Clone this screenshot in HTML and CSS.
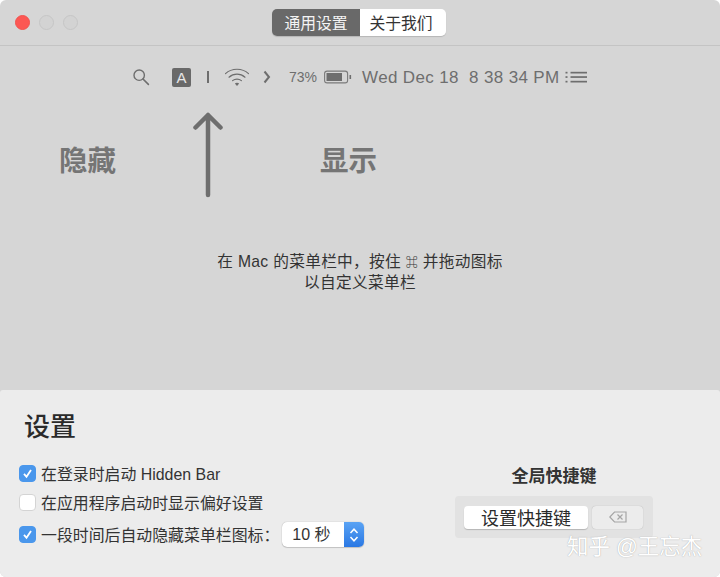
FILE: index.html
```html
<!DOCTYPE html>
<html lang="zh">
<head>
<meta charset="utf-8">
<title>Hidden Bar</title>
<link rel="stylesheet" href="styles.css">
</head>
<body>
<div class="window">
  <header class="titlebar">
    <div class="lights">
      <span class="light light-red"></span>
      <span class="light"></span>
      <span class="light"></span>
    </div>
    <div class="tabs">
      <span class="tab tab-active">通用设置</span>
      <span class="tab tab-about">关于我们</span>
    </div>
  </header>
  <main class="stage">
    <div class="menubar">
      <svg class="ic-search" width="18" height="18" viewBox="0 0 18 18"><circle cx="7.2" cy="7.2" r="5.2" fill="none" stroke="#6e6e6e" stroke-width="1.4"/><path d="M11 11l5.400 5.400" stroke="#6e6e6e" stroke-width="1.600" stroke-linecap="round"/></svg>
      <span class="a-badge">A</span>
      <span class="sep"></span>
      <svg class="ic-wifi" width="26" height="20" viewBox="0 0 26 20"><g fill="none" stroke="#6e6e6e" stroke-width="1.2" stroke-linecap="round"><path d="M1.500 6.600C7.800.8 18.200.8 24.500 6.600"/><path d="M5 10.200c4.500-4 11.500-4 16 0"/><path d="M8.600 13.600c2.500-2.100 6.300-2.100 8.800 0"/></g><path d="M10.800 16.600c1.300-1 3.100-1 4.400 0L13 19z" fill="#6e6e6e"/></svg>
      <svg class="ic-chev" width="8" height="14" viewBox="0 0 8 14"><path d="M1.500 1.500L6 7l-4.500 5.500" fill="none" stroke="#6e6e6e" stroke-width="2"/></svg>
      <span class="pct">73%</span>
      <svg class="ic-batt" width="28" height="14" viewBox="0 0 28 14"><rect x="0.600" y="1.100" width="23" height="11.800" rx="2.500" fill="none" stroke="#7a7a7a" stroke-width="1.100"/><rect x="2.500" y="3" width="15.500" height="8" fill="#6e6e6e"/><rect x="25.500" y="5" width="1.600" height="4" fill="#6e6e6e"/></svg>
      <span class="clock">Wed Dec 18&nbsp; 8 38 34 PM</span>
      <svg class="ic-list" width="23" height="14" viewBox="0 0 23 14"><g fill="#6e6e6e"><rect x="0.500" y="1.800" width="2" height="1.700"/><rect x="0.500" y="6.200" width="2" height="1.700"/><rect x="0.500" y="10.800" width="2" height="1.700"/><rect x="5.500" y="1.800" width="16.500" height="1.700"/><rect x="5.500" y="6.200" width="16.500" height="1.700"/><rect x="5.500" y="10.800" width="16.500" height="1.700"/></g></svg>
    </div>
    <div class="arrow-row">
      <span class="zone-label zone-hide">隐藏</span>
      <svg class="arrow" width="30" height="88" viewBox="0 0 30 88"><path d="M15 83V3M2.500 15.500L15 3l12.500 12.500" fill="none" stroke="#6e6e6e" stroke-width="4.500" stroke-linecap="round" stroke-linejoin="round"/></svg>
      <span class="zone-label zone-show">显示</span>
    </div>
    <p class="hint">在 Mac 的菜单栏中，按住 <span class="cmd">⌘</span> 并拖动图标<br>以自定义菜单栏</p>
  </main>
  <section class="panel">
    <div class="settings">
      <h1 class="panel-title">设置</h1>
      <label class="row"><span class="check check-on"><svg width="11" height="11" viewBox="0 0 11 11"><path d="M2 5.800l2.500 3L9 2" fill="none" stroke="#fff" stroke-width="1.800"/></svg></span>在登录时启动 Hidden Bar</label>
      <label class="row"><span class="check"></span>在应用程序启动时显示偏好设置</label>
      <label class="row row-last"><span class="check check-on"><svg width="11" height="11" viewBox="0 0 11 11"><path d="M2 5.800l2.500 3L9 2" fill="none" stroke="#fff" stroke-width="1.800"/></svg></span>一段时间后自动隐藏菜单栏图标：<span class="select"><span class="select-text">10 秒</span><span class="select-arrows"><svg width="10" height="16" viewBox="0 0 10 16"><path d="M1.500 6L5 2.200 8.500 6M1.500 10L5 13.800 8.500 10" fill="none" stroke="#fff" stroke-width="1.500"/></svg></span></span>
      </label>
    </div>
    <div class="shortcut">
      <h2 class="shortcut-title">全局快捷键</h2>
      <div class="shortcut-box">
        <span class="btn-record">设置快捷键</span>
        <span class="btn-clear"><svg width="18" height="12" viewBox="0 0 18 12"><g fill="none" stroke="#a5a5a5" stroke-width="1.200"><path d="M5.500 1H17v10H5.500L.8 6z"/><path d="M8.500 3.500l5 5M13.500 3.500l-5 5"/></g></svg></span>
      </div>
    </div>
    <span class="watermark">知乎 @王忘杰</span>
  </section>
</div>
</body>
</html>
```
FILE: styles.css
```css
* { box-sizing: border-box; }
html, body { margin: 0; padding: 0; background: #fff; }
body { font-family: "Liberation Sans", "Noto Sans CJK SC", sans-serif; }
.window {
  width: 720px; height: 577px; display: flex; flex-direction: column;
  background: #d6d6d6; border-radius: 6px; overflow: hidden;
}
.titlebar {
  height: 46px; flex: none; display: flex; align-items: flex-start;
  justify-content: flex-start; position: relative;
  border-bottom: 1px solid #c4c4c4; padding: 9px 0 0 272px;
}
.lights { position: absolute; left: 15px; top: 15px; display: flex; gap: 9px; }
.light { width: 15px; height: 15px; border-radius: 50%; background: #d3d3d3; border: 1px solid #c6c6c6; }
.light-red { background: #fc5753; border-color: #f2524e; }
.tabs { display: flex; height: 27px; font-size: 15.800px; border-radius: 5px; box-shadow: 0 1px 1px rgba(0,0,0,.15); }
.tab { width: 86px; display: flex; align-items: center; justify-content: center; background: #fff; color: #333; border-radius: 0 5px 5px 0; }
.tab-about { padding-right: 4px; }
.tab-active { width: 88px; background: #696969; color: #f4f4f4; border-radius: 5px 0 0 5px; }
.stage { flex: 1; position: relative; display: flex; flex-direction: column; color: #6e6e6e; }
.menubar { display: flex; align-items: center; height: 24px; margin-top: 19px; padding-left: 132px; }
.ic-search { margin-right: 22px; }
.a-badge { width: 19px; height: 19px; background: #696969; color: #e6e6e6; border-radius: 2px; font-size: 15px; display: flex; align-items: center; justify-content: center; margin-right: 16px; }
.sep { width: 2px; height: 12px; background: #6e6e6e; margin-right: 15px; }
.ic-wifi { margin-right: 13px; }
.ic-chev { margin-right: 18px; }
.pct { font-size: 14px; margin-right: 7px; }
.ic-batt { margin-right: 10px; }
.clock { font-size: 17px; letter-spacing: .36px; margin: 2px 5px 0 0; white-space: nowrap; }
.arrow-row { position: relative; height: 90px; margin-top: 23px; }
.arrow { position: absolute; left: 193px; top: 0; }
.zone-label { position: absolute; font-size: 28.500px; font-weight: 700; color: #757575; top: 29px; line-height: 40px; }
.zone-hide { left: 59px; }
.zone-show { left: 320px; }
.hint { margin: 50px 0 0; text-align: center; font-size: 15.700px; line-height: 20px; letter-spacing: .3px; color: #333; }
.cmd { font-size: 12px; font-weight: 700; }
.panel {
  height: 187px; flex: none; background: #ececec; position: relative;
  display: flex; justify-content: space-between; border-radius: 3px 3px 0 0;
}
.settings { padding: 19px 0 0 19px; }
.panel-title { margin: 0 0 14px 5px; font-size: 26px; font-weight: 500; line-height: 36px; color: #2a2a2a; }
.row { display: flex; align-items: center; height: 29px; font-size: 15.900px; color: #333; white-space: nowrap; }
.row-last { margin-top: 3px; }
.check { width: 17px; height: 17px; border-radius: 4px; background: #fff; border: 1px solid #d4d4d4; margin-right: 5px; display: flex; align-items: center; justify-content: center; flex: none; }
.check-on { background: #4a97ec; border-color: #4a97ec; }
.select { display: flex; width: 82px; height: 25px; margin-left: 3px; background: #fff; border-radius: 5px; box-shadow: 0 0 1px rgba(0,0,0,.35), 0 1px 1px rgba(0,0,0,.15); overflow: hidden; }
.select-text { flex: 1; padding-left: 10px; line-height: 25px; font-size: 16px; }
.select-arrows { width: 20px; background: linear-gradient(#5aa3f4, #2a78e4); display: flex; align-items: center; justify-content: center; }
.shortcut { width: 198px; margin: 76px 67px 0 0; display: flex; flex-direction: column; align-items: center; }
.shortcut-title { margin: 0 0 8px; font-size: 17px; font-weight: 700; line-height: 22px; color: #333; }
.shortcut-box { width: 198px; height: 42px; background: #e2e2e2; border-radius: 4px; display: flex; align-items: center; justify-content: flex-start; padding-left: 9px; gap: 4px; }
.btn-record { width: 124px; height: 23px; background: #fff; border-radius: 4px; box-shadow: 0 1px 1px rgba(0,0,0,.2); font-size: 18px; color: #2a2a2a; display: flex; align-items: center; justify-content: center; }
.btn-clear { width: 51px; height: 23px; background: #ececec; border-radius: 4px; box-shadow: 0 0 1px rgba(0,0,0,.25); display: flex; align-items: center; justify-content: center; }
.watermark { position: absolute; left: 567px; top: 143px; font-size: 21.500px; line-height: 28px; color: #fff; text-shadow: 0 0 1px rgba(120,120,120,.7); white-space: nowrap; }
```
